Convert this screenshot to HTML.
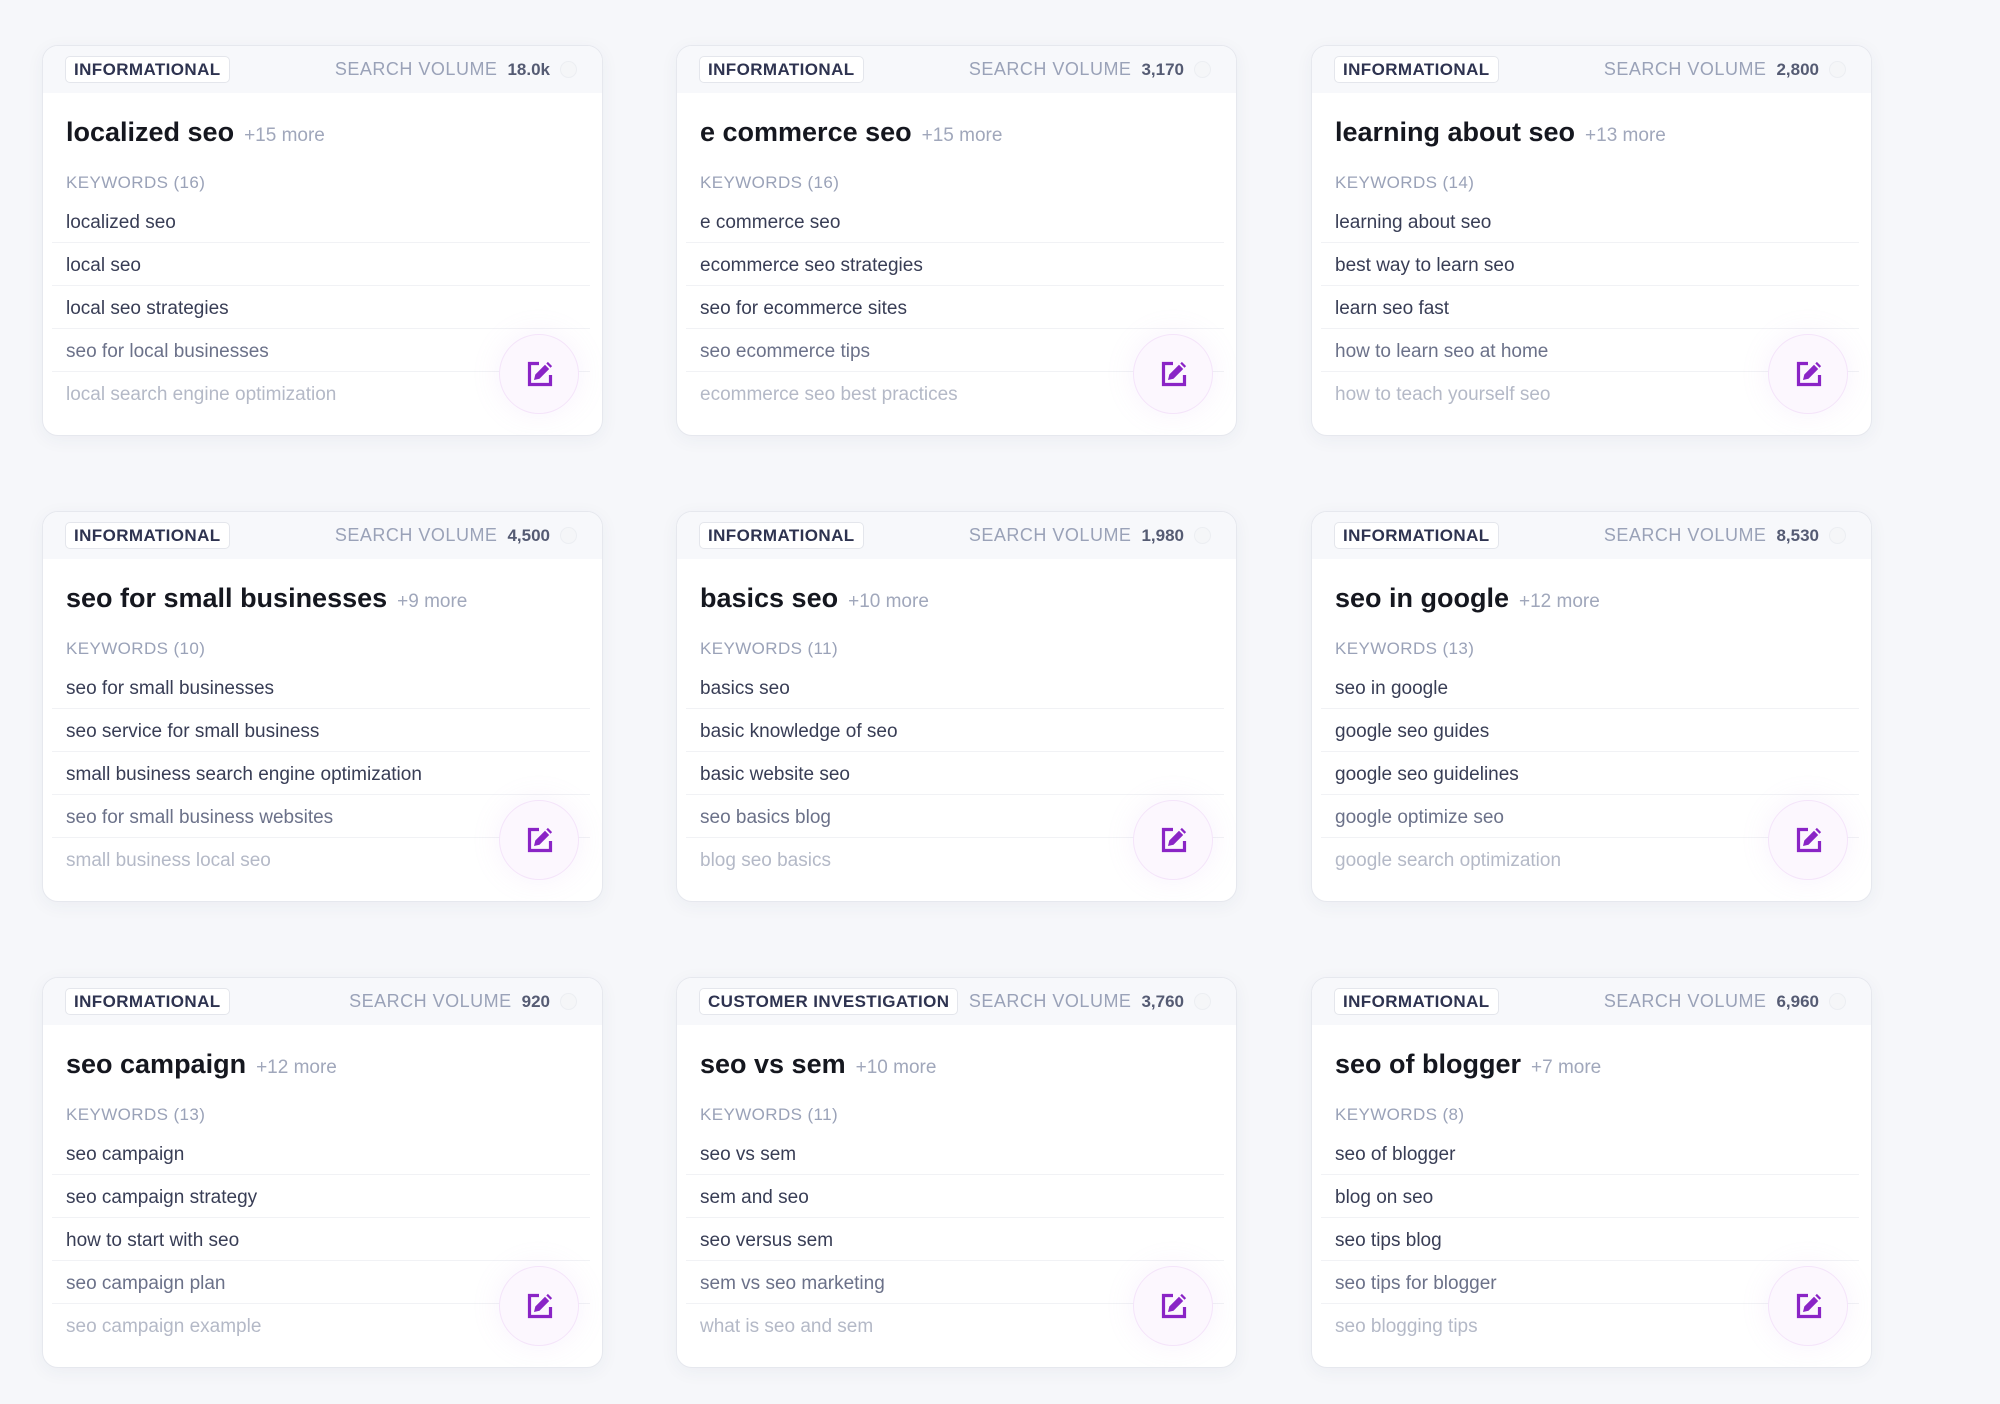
<!DOCTYPE html>
<html><head><meta charset="utf-8"><style>
*{margin:0;padding:0;box-sizing:border-box}
body{width:2000px;height:1404px;background:#f6f7fa;font-family:"Liberation Sans",sans-serif;position:relative;overflow:hidden}
.card{position:absolute;width:561px;height:391px;background:#fff;border:1.5px solid #e6e8ee;border-radius:16px;box-shadow:0 4px 18px rgba(40,50,90,0.05);overflow:hidden}
.hd{position:absolute;left:0;top:0;right:0;height:47px;background:#f7f8fb}
.badge{position:absolute;left:22px;top:10px;height:27px;padding:0 8px;border:1px solid #e4e6ec;background:#fff;border-radius:5px;font-size:17px;line-height:25px;color:#2e3350;font-weight:bold;letter-spacing:0.4px}
.sv{position:absolute;right:52px;top:10px;line-height:27px;font-size:18px;color:#9aa2b8;letter-spacing:0.5px}
.sv b{color:#555b73;margin-left:10px;font-weight:bold;letter-spacing:0;font-size:17px}
.dot{position:absolute;right:25px;top:15px;width:17px;height:17px;border-radius:50%;border:1px solid #eceef2;background:#f5f6f8}
.t{position:absolute;left:23px;top:71px;font-size:27px;font-weight:bold;color:#15171f;white-space:nowrap}
.t span{font-size:19px;color:#a0a7bb;font-weight:normal;margin-left:10px}
.kw{position:absolute;left:23px;top:127px;font-size:17px;color:#9aa2b8;letter-spacing:0.4px}
.row{position:absolute;left:9px;right:12px;height:43px;border-bottom:1.5px solid #f1f2f5;font-size:19px;line-height:45px;padding-left:14px;white-space:nowrap}
.r1,.r2,.r3{color:#383d55}.r4{color:#6b7189}.r5{color:#b4b9c7;border-bottom:none}
.btn{position:absolute;left:456px;top:288px;width:80px;height:80px;border-radius:50%;background:#fcf7fe;border:1.5px solid #f4e4fa;box-shadow:0 0 30px rgba(200,150,230,0.12)}
.btn svg{position:absolute;left:26px;top:25px}
</style></head><body>
<div id="root"></div>
<script>
const data=[
["INFORMATIONAL","18.0k","localized seo","+15 more","KEYWORDS (16)",["localized seo","local seo","local seo strategies","seo for local businesses","local search engine optimization"]],
["INFORMATIONAL","3,170","e commerce seo","+15 more","KEYWORDS (16)",["e commerce seo","ecommerce seo strategies","seo for ecommerce sites","seo ecommerce tips","ecommerce seo best practices"]],
["INFORMATIONAL","2,800","learning about seo","+13 more","KEYWORDS (14)",["learning about seo","best way to learn seo","learn seo fast","how to learn seo at home","how to teach yourself seo"]],
["INFORMATIONAL","4,500","seo for small businesses","+9 more","KEYWORDS (10)",["seo for small businesses","seo service for small business","small business search engine optimization","seo for small business websites","small business local seo"]],
["INFORMATIONAL","1,980","basics seo","+10 more","KEYWORDS (11)",["basics seo","basic knowledge of seo","basic website seo","seo basics blog","blog seo basics"]],
["INFORMATIONAL","8,530","seo in google","+12 more","KEYWORDS (13)",["seo in google","google seo guides","google seo guidelines","google optimize seo","google search optimization"]],
["INFORMATIONAL","920","seo campaign","+12 more","KEYWORDS (13)",["seo campaign","seo campaign strategy","how to start with seo","seo campaign plan","seo campaign example"]],
["CUSTOMER INVESTIGATION","3,760","seo vs sem","+10 more","KEYWORDS (11)",["seo vs sem","sem and seo","seo versus sem","sem vs seo marketing","what is seo and sem"]],
["INFORMATIONAL","6,960","seo of blogger","+7 more","KEYWORDS (8)",["seo of blogger","blog on seo","seo tips blog","seo tips for blogger","seo blogging tips"]]];
const xs=[42,676,1311],ys=[45,511,977];
let h='';
data.forEach((d,i)=>{
 const x=xs[i%3],y=ys[Math.floor(i/3)];
 let rows='';
 d[5].forEach((r,j)=>{rows+=`<div class="row r${j+1}" style="top:${154+j*43}px">${r}</div>`});
 h+=`<div class="card" style="left:${x}px;top:${y}px"><div class="hd"></div><div class="badge">${d[0]}</div><div class="sv">SEARCH VOLUME<b>${d[1]}</b></div><div class="dot"></div><div class="t">${d[2]}<span>${d[3]}</span></div><div class="kw">${d[4]}</div>${rows}<div class="btn"><svg width="28" height="28" viewBox="0 0 28 28"><path d="M13 3.5H3.5v21h21V15" fill="none" stroke="#8a24c6" stroke-width="3.2"/><path d="M8 20l1.3-5.5L19 4.8l4.2 4.2-9.7 9.7z" fill="#8a24c6"/><path d="M20.3 3.5l1.6-1.6 4.2 4.2-1.6 1.6z" fill="#8a24c6"/></svg></div></div>`;
});
document.getElementById('root').innerHTML=h;
</script>
</body></html>
